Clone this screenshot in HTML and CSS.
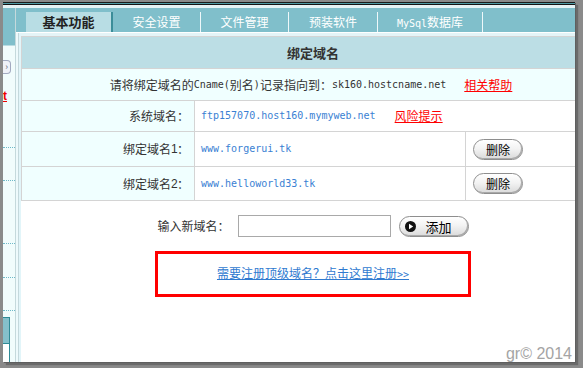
FILE: index.html
```html
<!DOCTYPE html>
<html lang="zh-CN">
<head>
<meta charset="utf-8">
<title>绑定域名</title>
<link rel="stylesheet" href="styles.css">
</head>
<body>
<div class="frame">
  <div class="screen">
    <div class="topline"></div>
    <div class="body">
      <aside class="sidebar">
        <div class="side-head"></div>
        <span class="side-btn">›</span>
        <a class="side-link">t</a>
        <div class="dots d1"></div>
        <div class="dots d2"></div>
        <div class="dots d3"></div>
        <div class="dots d4"></div>
        <div class="dots d5"></div>
        <div class="side-box"></div>
        <div class="side-box2"></div>
      </aside>
      <div class="main">
        <nav class="tabs">
          <a class="tab active w1">基本功能</a>
          <a class="tab w2">安全设置</a>
          <a class="tab w2">文件管理</a>
          <a class="tab w3">预装软件</a>
          <a class="tab w4"><span class="en">MySql</span>数据库</a>
        </nav>
        <div class="workspace">
          <div class="rail"></div>
          <div class="stage">
            <div class="inner">
              <div class="strip"></div>
              <div class="panel">
                <div class="cell head">绑定域名</div>
                <div class="cell notice">请将绑定域名的<span class="en">Cname(</span>别名<span class="en">)</span>记录指向到：<span class="en">sk160.hostcname.net</span><a class="red gap">相关帮助</a></div>
                <div class="cell label">系统域名：</div>
                <div class="cell value wide"><span class="en blue">ftp157070.host160.mymyweb.net</span><a class="red gap2">风险提示</a></div>
                <div class="cell label">绑定域名<span class="en num">1</span>：</div>
                <div class="cell value"><span class="en blue">www.forgerui.tk</span></div>
                <div class="cell action"><button class="pill del">删除</button></div>
                <div class="cell label">绑定域名<span class="en num">2</span>：</div>
                <div class="cell value"><span class="en blue">www.helloworld33.tk</span></div>
                <div class="cell action"><button class="pill del">删除</button></div>
              </div>
              <form class="addrow">
                <label class="addlabel">输入新域名：</label>
                <input class="domain" type="text">
                <button class="pill add" type="button"><svg class="play" width="11" height="11" viewBox="0 0 11 11"><circle cx="5.5" cy="5.5" r="5.5" fill="#111"/><path d="M4 2.8 L8.2 5.5 L4 8.2 Z" fill="#fff"/></svg><span>添加</span></button>
              </form>
              <div class="regbox"><a class="reglink">需要注册顶级域名？点击这里注册<span class="en">&gt;&gt;</span></a></div>
            </div>
          </div>
        </div>
      </div>
    </div>
    <div class="watermark">gr© 2014</div>
  </div>
</div>
</body>
</html>
```

FILE: styles.css
```css
html, body {
  margin: 0;
  padding: 0;
}
body {
  font-family: "Noto Sans CJK SC", "Noto Sans", sans-serif;
  font-size: 12px;
  line-height: 14px;
  color: #333;
}
.frame {
  width: 583px;
  height: 368px;
  box-sizing: border-box;
  padding: 2px 8px 6px 3px;
  background: #8a8a8a;
  display: flex;
}
.screen {
  flex: 1;
  display: flex;
  flex-direction: column;
  position: relative;
  overflow: hidden;
  background: #fff;
  box-shadow: 1px 1px 0 #5f5f5f, 3px 3px 1px #6a6a6a;
}
.topline {
  height: 6px;
  flex: none;
  background: linear-gradient(#1b1b1b 0 1px, #4e9aa3 1px 2px, #151515 2px 3px, #e6f3f5 3px 6px);
}
.body {
  flex: 1;
  display: flex;
  min-height: 0;
}
.sidebar {
  width: 12px;
  flex: none;
  background: #f1fcfc;
  border-right: 1px solid #c5d9dc;
  display: flex;
  flex-direction: column;
}
.side-head {
  height: 37px;
  background: #80bfcb;
  border-bottom: 1px solid #b9dce2;
}
.side-btn {
  margin-top: 14px;
  width: 8px;
  height: 14px;
  box-sizing: border-box;
  border: 1px solid #a2a9c0;
  border-left: none;
  border-radius: 0 4px 4px 0;
  background: #eef1f8;
  font-size: 9px;
  line-height: 11px;
  color: #667;
  text-align: center;
}
.side-link {
  margin-top: 16px;
  height: 12px;
  width: 7px;
  font-family: "Liberation Sans", sans-serif;
  font-weight: bold;
  font-size: 12px;
  line-height: 12px;
  color: #e00;
  text-decoration: underline;
}
.dots {
  border-top: 1px dotted #6fb9c8;
  height: 0;
}
.d1 { margin-top: 45px; }
.d2 { margin-top: 32px; }
.d3 { margin-top: 62px; }
.d4 { margin-top: 33px; }
.d5 { margin-top: 32px; }
.side-box {
  margin-top: 6px;
  width: 6px;
  height: 25px;
  background: #85c0cb;
  border: 1px solid #2e8a96;
  border-left: none;
}
.side-box2 {
  flex: 1;
  width: 6px;
  background: #fff;
  border-right: 1px solid #2e8a96;
}
.main {
  flex: 1;
  display: flex;
  flex-direction: column;
  min-width: 0;
}
.tabs {
  height: 24px;
  flex: none;
  background: #80bfcb;
  display: flex;
  align-items: flex-end;
  padding-left: 10px;
}
.tab {
  height: 20px;
  line-height: 20px;
  box-sizing: border-box;
  text-align: center;
  color: #fff;
  font-size: 12px;
  border-right: 1px solid #eef8fa;
}
.tab.active {
  background: #b8dde4;
  color: #222;
  font-weight: bold;
  font-size: 13px;
  border-right: 2px solid #3b8d99;
}
.w1 { width: 87px; }
.w2 { width: 88px; }
.w3 { width: 89px; }
.w4 { width: 105px; }
.workspace {
  flex: 1;
  display: flex;
  border-top: 1px solid #fff;
  min-height: 0;
}
.rail {
  width: 2px;
  background: #eefafc;
  border-right: 1px solid #c4d8dc;
}
.stage {
  flex: 1;
  min-width: 0;
  overflow: hidden;
  border-left: 2px solid #e2f5f9;
  background: #fff;
}
.inner {
  width: 584px;
  display: flex;
  flex-direction: column;
  align-items: center;
}
.strip {
  align-self: stretch;
  height: 3px;
  background: #e4f4f7;
}
.panel {
  width: 584px;
  box-sizing: border-box;
  display: grid;
  grid-template-columns: 173px 271px 1fr;
  grid-template-rows: 32px 32px 31px 35px 34px;
  border: 1px solid #d4d4d4;
  border-bottom: none;
}
.cell {
  box-sizing: border-box;
  border-bottom: 1px solid #d4d4d4;
  display: flex;
  align-items: center;
  white-space: nowrap;
}
.head {
  grid-column: 1 / -1;
  background: #bcdee5;
  justify-content: center;
  font-weight: bold;
  font-size: 13px;
  color: #333;
}
.notice {
  grid-column: 1 / -1;
  background: #f0ffff;
  justify-content: center;
  padding-right: 4px;
}
.label {
  background: #f0ffff;
  border-right: 1px solid #d4d4d4;
  justify-content: flex-end;
  padding-right: 5px;
}
.value {
  padding-left: 6px;
  border-right: 1px solid #d4d4d4;
}
.value.wide {
  grid-column: 2 / -1;
  border-right: none;
}
.action {
  padding-left: 7px;
}
.en {
  font-family: "DejaVu Sans Mono", "Liberation Mono", monospace;
  font-size: 10px;
}
.num {
  font-family: "Liberation Sans", sans-serif;
  font-size: 12px;
  display: inline-block;
  width: 6px;
}
.blue {
  color: #3a7fd3;
}
.red {
  color: #f00;
  text-decoration: underline;
}
.gap { margin-left: 18px; }
.gap2 { margin-left: 19px; }
.pill {
  height: 21px;
  box-sizing: border-box;
  border: 1px solid #8e8e8e;
  border-radius: 11px;
  background: linear-gradient(#ffffff, #f3f3f3 45%, #dadada);
  box-shadow: inset -1px -1px 0 #a9a9a9;
  font-family: "Noto Sans CJK SC", sans-serif;
  color: #000;
  padding: 0;
  display: flex;
  align-items: center;
  justify-content: center;
}
.del {
  width: 50px;
  font-size: 12px;
}
.addrow {
  margin: 14px 0 0;
  display: flex;
  align-items: center;
  gap: 8px;
}
.addlabel {
  width: 72px;
  font-size: 12px;
  color: #333;
}
.domain {
  width: 153px;
  height: 22px;
  box-sizing: border-box;
  border: 1px solid #a9a9a9;
  margin: 0;
  padding: 0 3px;
}
.add {
  width: 70px;
  justify-content: flex-start;
  padding-left: 5px;
  font-size: 13px;
}
.play {
  margin-right: 10px;
}
.regbox {
  margin-top: 14px;
  width: 316px;
  height: 46px;
  box-sizing: border-box;
  border: 3px solid #f00;
  display: flex;
  align-items: center;
  justify-content: center;
}
.reglink {
  color: #2f7ad0;
  text-decoration: underline;
  font-size: 12px;
}
.watermark {
  position: absolute;
  right: 3px;
  bottom: 0;
  font-family: "Liberation Sans", Arial, sans-serif;
  font-size: 16px;
  line-height: 17px;
  color: #a4a4a4;
}
```
